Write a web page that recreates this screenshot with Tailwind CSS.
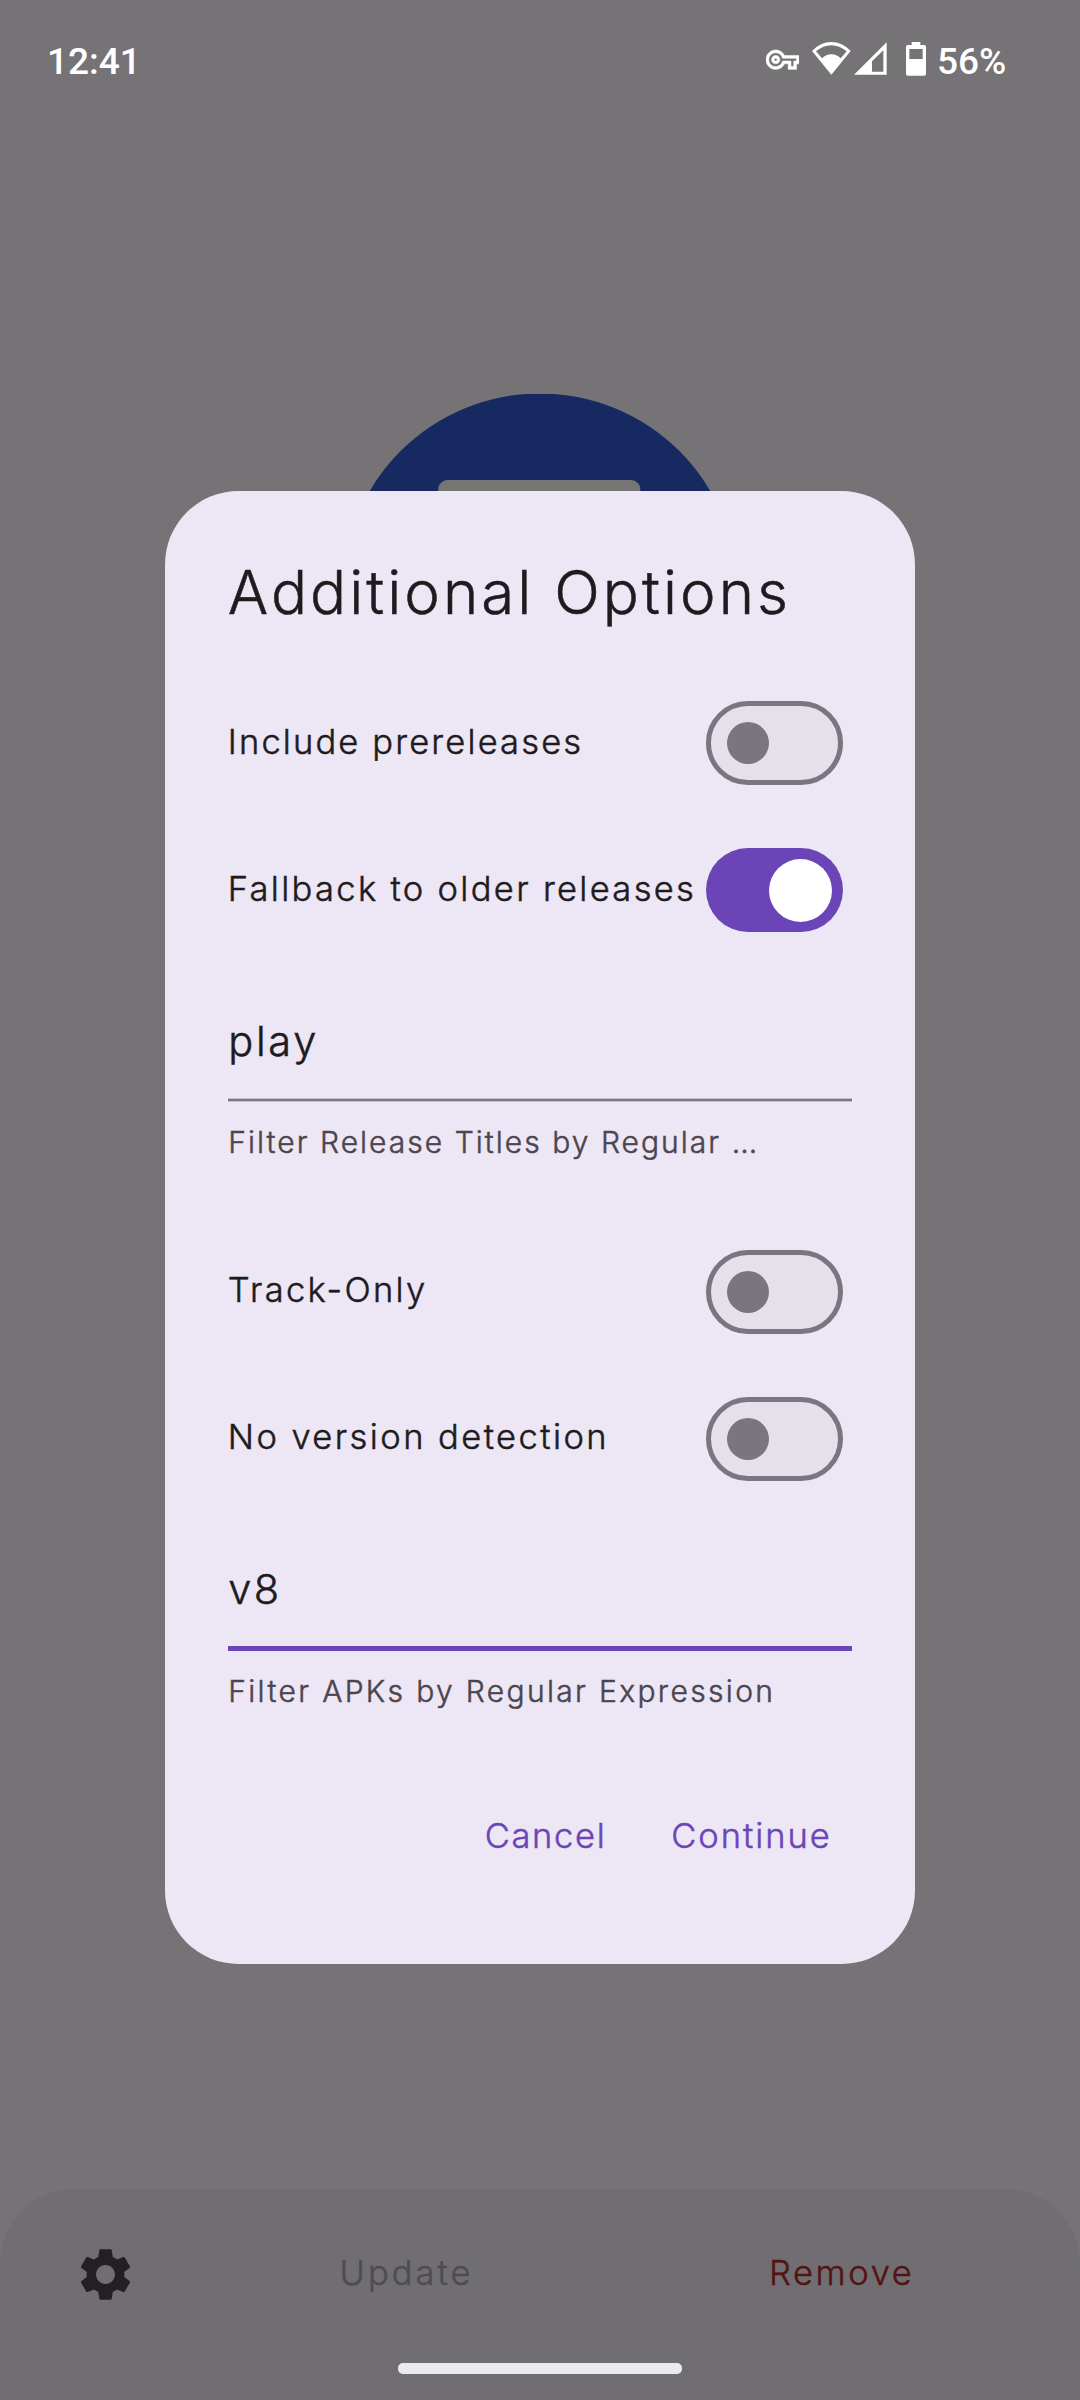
<!DOCTYPE html>
<html lang="en">
<head>
<meta charset="utf-8">
<title>Additional Options</title>
<script src="https://cdn.jsdelivr.net/npm/@tailwindcss/browser@4"></script>
</head>
<body class="relative flex h-[2400px] w-[1080px] flex-col overflow-hidden bg-[#757376] font-['Inter',sans-serif] font-light">

  <!-- Status bar -->
  <header class="flex h-[122px] items-center pl-[47px] font-['Roboto',sans-serif] text-[37px] leading-none font-medium text-white">
    <span class="w-[719px]">12:41</span>
    <svg class="mb-[2px] h-[33.3px] w-[33.3px] shrink-0" viewBox="0 0 24 24" fill="currentColor" stroke="currentColor" stroke-width="0.4"><path d="M22 19h-6v-4h-2.68c-1.14 2.42-3.6 4-6.32 4-3.86 0-7-3.14-7-7s3.14-7 7-7c2.72 0 5.17 1.58 6.32 4H24v6h-2v4zm-4-2h2v-4h2v-2H11.94l-.23-.67C11.01 8.34 9.11 7 7 7c-2.76 0-5 2.24-5 5s2.24 5 5 5c2.11 0 4.01-1.34 4.71-3.33l.23-.67H18v4zM7 15c-1.65 0-3-1.35-3-3s1.35-3 3-3 3 1.35 3 3-1.35 3-3 3zm0-4c-.55 0-1 .45-1 1s.45 1 1 1 1-.45 1-1-.45-1-1-1z"/></svg>
    <svg class="mb-1 ml-[12.7px] h-[34px] w-[38.7px] shrink-0" viewBox="0 0 116 102" fill="currentColor" fill-rule="evenodd"><path d="M0 27Q25 0 58 0T116 27L58 98ZM12 28L30 49Q42 37 58 37T86 49L104 28Q82 10 58 10T12 28Z"/></svg>
    <svg class="mb-1 ml-[3.6px] h-[34px] w-[32.7px] shrink-0" viewBox="0 0 98 102" fill="currentColor" fill-rule="evenodd"><path d="M0 98L98 1V98ZM54 58V89H88V25Z"/></svg>
    <svg class="mb-1 ml-[19px] h-[34px] w-[20px] shrink-0" viewBox="0 0 60 102" fill="currentColor" fill-rule="evenodd"><path d="M17 0H43V9H54Q60 9 60 15V95Q60 101 54 101H6Q0 101 0 95V15Q0 9 6 9H17ZM10 21V51H50V21Z"/></svg>
    <span class="ml-[11px]">56%</span>
  </header>

  <!-- App icon -->
  <main class="flex flex-1 justify-center pt-[271.5px]">
    <svg class="h-[394px] w-[394px]" viewBox="0 0 394 394"><circle cx="197" cy="197" r="197.5" fill="#162a61"/><rect x="95.3" y="86" width="202" height="220" rx="9" fill="#757674"/></svg>
  </main>

  <!-- Bottom actions -->
  <footer class="h-[211px] rounded-t-[74px] bg-[#706e73]">
    <div class="flex h-[171px] items-center pl-[73.5px] text-[34.5px] leading-[42px] [-webkit-text-stroke:0.5px]">
      <svg class="h-[63px] w-[63px] shrink-0" viewBox="0 0 24 24" fill="#222025"><path d="M19.14 12.94c.04-.3.06-.61.06-.94 0-.32-.02-.64-.07-.94l2.03-1.58c.18-.14.23-.41.12-.61l-1.92-3.32c-.12-.22-.37-.29-.59-.22l-2.39.96c-.5-.38-1.03-.7-1.62-.94l-.36-2.54c-.04-.24-.24-.41-.48-.41h-3.84c-.24 0-.43.17-.47.41l-.36 2.54c-.59.24-1.13.57-1.62.94l-2.39-.96c-.22-.08-.47 0-.59.22L2.74 8.87c-.12.21-.08.47.12.61l2.03 1.58c-.05.3-.09.63-.09.94s.02.64.07.94l-2.03 1.58c-.18.14-.23.41-.12.61l1.92 3.32c.12.22.37.29.59.22l2.39-.96c.5.38 1.03.7 1.62.94l.36 2.54c.05.24.24.41.48.41h3.84c.24 0 .44-.17.47-.41l.36-2.54c.59-.24 1.13-.56 1.62-.94l2.39.96c.22.08.47 0 .59-.22l1.92-3.32c.12-.22.07-.47-.12-.61l-2.01-1.58zM12 15.6c-1.98 0-3.6-1.62-3.6-3.6s1.62-3.6 3.6-3.6 3.6 1.62 3.6 3.6-1.62 3.6-3.6 3.6z"/></svg>
      <span class="ml-[203px] w-[429.5px] pb-1 tracking-[3px] text-[#4e4c50]">Update</span>
      <span class="pb-1 tracking-[2.6px] text-[#521512]">Remove</span>
    </div>
    <div class="mx-auto mt-[3px] h-[11px] w-[284px] rounded-[5px] bg-[#ebebeb]"></div>
  </footer>

  <!-- Dialog -->
  <div class="absolute inset-0 flex items-start justify-center pt-[491px]">
    <section class="flex h-[1472.5px] w-[750.5px] flex-col rounded-[73.5px] bg-[#ede6f5] px-[63px] pt-[63px] text-[34.5px] leading-[42px] text-[#1d1b1e] [-webkit-text-stroke:0.5px]">
      <h1 class="text-[60px] leading-[76px] tracking-[3.05px] whitespace-nowrap">Additional Options</h1>

      <div class="mt-[71px] flex h-[84px] items-center justify-between pr-[9.5px]">
        <span class="pb-[3px] tracking-[2.14px] whitespace-nowrap">Include prereleases</span>
        <span class="flex h-[84px] w-[136.5px] items-center rounded-full border-[5px] border-[#7a757f] bg-[#e6e0ea] pl-[16px]"><span class="size-[42px] rounded-full bg-[#7a757f]"></span></span>
      </div>

      <div class="mt-[63px] flex h-[84px] items-center justify-between pr-[9.5px]">
        <span class="w-[466px] pb-[3px] tracking-[2.32px] whitespace-nowrap">Fallback to older releases</span>
        <span class="flex h-[84px] w-[136.5px] items-center justify-end rounded-full bg-[#6b45b8] pr-[10.5px]"><span class="size-[63px] rounded-full bg-white"></span></span>
      </div>

      <div class="mt-[84px] pl-[0.5px] text-[41.5px] leading-[50px] tracking-[2.7px]">play</div>
      <div class="mt-8 h-1 shrink-0 border-y border-[#7a757f]/35 bg-[#7a757f] bg-clip-padding"></div>
      <div class="mt-[22px] pl-[0.5px] text-[30px] leading-[36px] tracking-[2.03px] whitespace-nowrap text-[#4a454e]">Filter Release Titles by Regular …</div>

      <div class="mt-[90px] flex h-[84px] items-center justify-between pr-[9.5px]">
        <span class="pb-[4px] tracking-[2.3px]">Track-Only</span>
        <span class="flex h-[84px] w-[136.5px] items-center rounded-full border-[5px] border-[#7a757f] bg-[#e6e0ea] pl-[16px]"><span class="size-[42px] rounded-full bg-[#7a757f]"></span></span>
      </div>

      <div class="mt-[63px] flex h-[84px] items-center justify-between pr-[9.5px]">
        <span class="pb-[4px] tracking-[2.43px]">No version detection</span>
        <span class="flex h-[84px] w-[136.5px] items-center rounded-full border-[5px] border-[#7a757f] bg-[#e6e0ea] pl-[16px]"><span class="size-[42px] rounded-full bg-[#7a757f]"></span></span>
      </div>

      <div class="mt-[83px] pl-[0.5px] text-[41.5px] leading-[50px] tracking-[2.5px]">v8</div>
      <div class="mt-8 h-[5px] shrink-0 bg-[#6b45b8]"></div>
      <div class="mt-[22px] pl-[0.5px] text-[30px] leading-[36px] tracking-[2.34px] whitespace-nowrap text-[#4a454e]">Filter APKs by Regular Expression</div>

      <div class="mt-[106px] flex pl-[257px] text-[#6b45b8]">
        <span class="w-[186.5px] tracking-[1.65px]">Cancel</span>
        <span class="tracking-[1.95px]">Continue</span>
      </div>
    </section>
  </div>
</body>
</html>
